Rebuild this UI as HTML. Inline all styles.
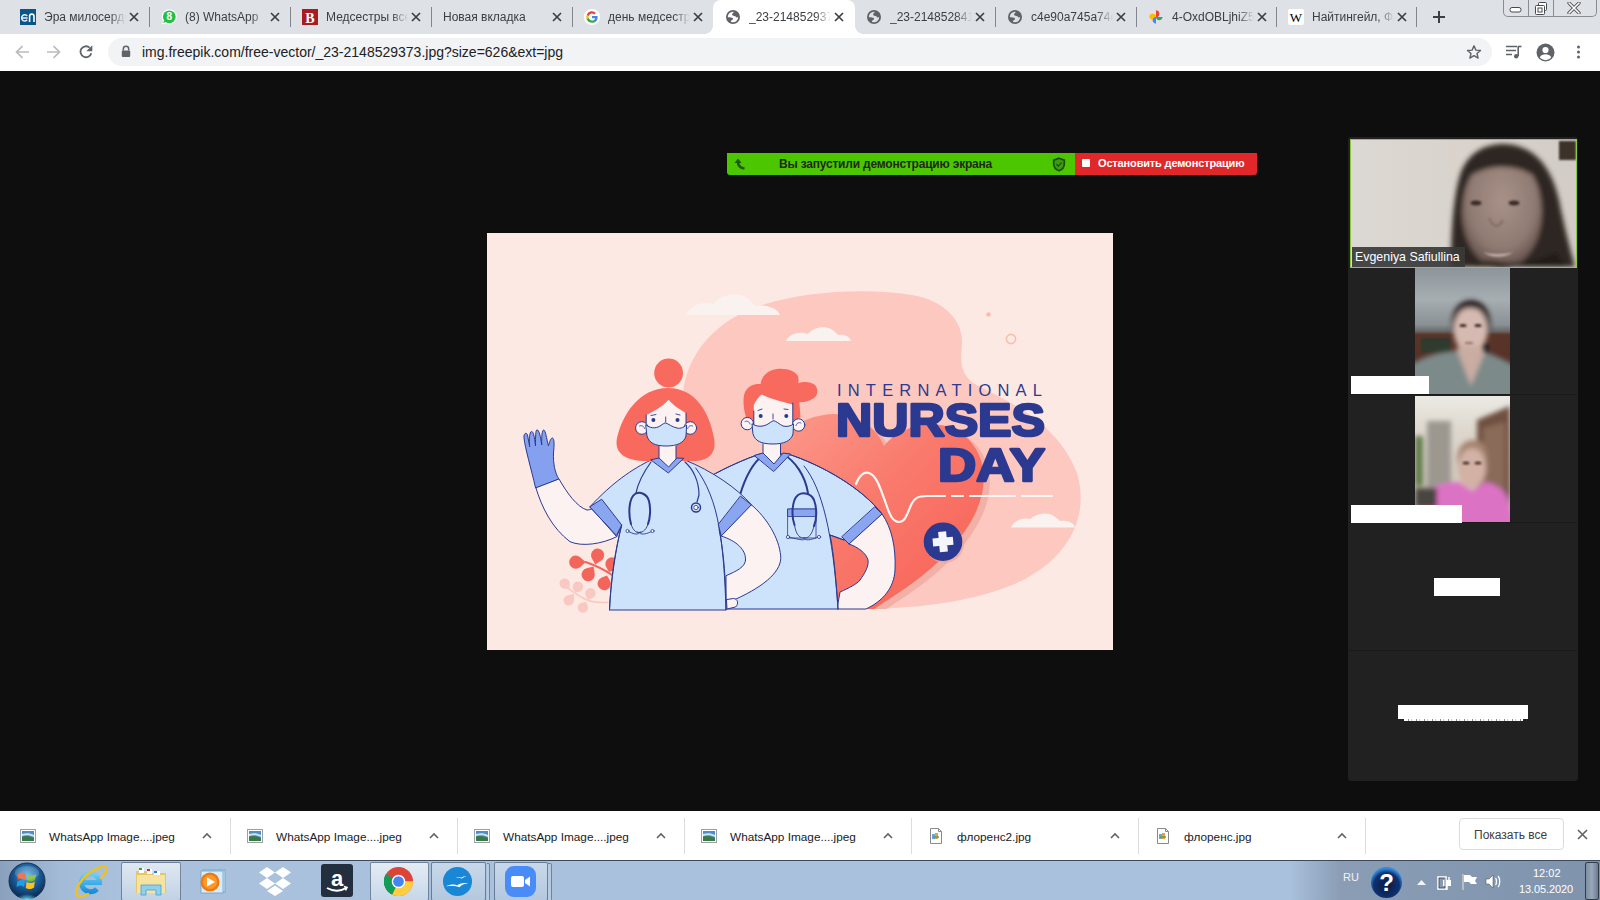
<!DOCTYPE html>
<html><head><meta charset="utf-8">
<style>
*{box-sizing:border-box;margin:0;padding:0}
html,body{width:1600px;height:900px;overflow:hidden;background:#0e0e0e;font-family:"Liberation Sans",sans-serif}
.a{position:absolute}
#tabs{left:0;top:0;width:1600px;height:34px;background:#dee1e6}
.tab{position:absolute;top:0;height:34px;width:141px}
.tab .fav{position:absolute;left:12px;top:9px;width:16px;height:16px}
.tab .t{position:absolute;left:36px;top:10px;width:76px;height:16px;font-size:12px;line-height:14px;color:#3c4043;white-space:nowrap;overflow:hidden;
 -webkit-mask-image:linear-gradient(90deg,#000 80%,transparent 100%)}
.tab .x{position:absolute;left:121px;top:12px;width:10px;height:10px}
.sep{position:absolute;top:7px;width:1px;height:20px;background:#80868b}
#toolbar{left:0;top:34px;width:1600px;height:37px;background:#fff}
#omni{left:108px;top:38px;width:1384px;height:28px;border-radius:14px;background:#f1f3f4}
#url{left:142px;top:44px;font-size:14px;line-height:16px;color:#202124;white-space:nowrap}
#shelf{left:0;top:811px;width:1600px;height:49px;background:#fff}
.dl{position:absolute;top:0;height:49px;width:227px}
.dl .ic{position:absolute;left:20px;top:18px;width:16px;height:14px}
.dl .t{position:absolute;left:49px;top:19px;font-size:11.8px;line-height:14px;color:#202124;white-space:nowrap}
.dl .ch{position:absolute;left:202px;top:21px;width:10px;height:7px}
.dsep{position:absolute;top:7px;width:1px;height:36px;background:#dadce0}
#taskbar{left:0;top:860px;width:1600px;height:40px;background:linear-gradient(90deg,#8aa0bc 0px,#a3bbd7 60px,#a9c1dc 120px,#a9c1dc 1290px,#8a9db5 1340px,#7f93ad 1600px);border-top:1px solid #3b4a5c}
.tb{position:absolute;top:1px;height:39px;border:1px solid rgba(40,60,90,.55);border-radius:2px;background:linear-gradient(#d8e3ef,#b5c8dd)}
#panel{left:1348px;top:137px;width:230px;height:644px;background:#212121;border-radius:3px}
</style></head><body>

<!-- TAB STRIP -->
<div id="tabs" class="a">
<div class="a" style="left:713px;top:0;width:142px;height:34px;background:#fff;border-radius:8px 8px 0 0"></div>
<div class="a" style="left:705px;top:26px;width:8px;height:8px;background:radial-gradient(circle at 0 0,transparent 7.5px,#fff 8px)"></div>
<div class="a" style="left:855px;top:26px;width:8px;height:8px;background:radial-gradient(circle at 100% 0,transparent 7.5px,#fff 8px)"></div>
<div class="tab" style="left:8px"><svg class="fav" viewBox="0 0 16 16"><rect width="16" height="16" fill="#0b5689"/><path d="M7.2 10.8 A3.1 3.1 0 1 1 7.2 7 M2 8.9 H7.6" stroke="#e8f0f6" stroke-width="1.5" fill="none"/><path d="M9.6 15 V9.2 A2.2 2.2 0 0 1 14 9.2 V15" stroke="#fff" stroke-width="1.6" fill="none" transform="translate(0,-1.9)"/></svg><div class="t" style="left:36px;width:82px">Эра милосердия — православная газета</div><svg class="x" viewBox="0 0 10 10"><path d="M1 1 9 9M9 1 1 9" stroke="#3c4043" stroke-width="1.7"/></svg></div>
<div class="tab" style="left:149px"><svg class="fav" viewBox="0 0 16 16"><circle cx="8.3" cy="7.8" r="7.6" fill="#fff"/><path d="M3 11 L0.8 15.6 L5.8 13.8Z" fill="#fff"/><circle cx="8.3" cy="7.8" r="6.4" fill="#25c043"/><path d="M3.3 11 L2.2 14 L5.3 12.8Z" fill="#25c043"/><text x="8.4" y="11.4" font-size="10" font-weight="700" font-family="Liberation Sans" fill="#fff" text-anchor="middle">8</text></svg><div class="t" style="left:36px;width:82px">(8) WhatsApp</div><svg class="x" viewBox="0 0 10 10"><path d="M1 1 9 9M9 1 1 9" stroke="#3c4043" stroke-width="1.7"/></svg></div>
<div class="tab" style="left:290px"><svg class="fav" viewBox="0 0 16 16"><rect width="16" height="16" fill="#a81c1f"/><text x="8" y="13.5" font-size="14" font-weight="700" font-family="Liberation Serif" fill="#fff" text-anchor="middle">B</text></svg><div class="t" style="left:36px;width:82px">Медсестры всего мира</div><svg class="x" viewBox="0 0 10 10"><path d="M1 1 9 9M9 1 1 9" stroke="#3c4043" stroke-width="1.7"/></svg></div>
<div class="tab" style="left:431px"><div class="t" style="left:12px;width:106px">Новая вкладка</div><svg class="x" viewBox="0 0 10 10"><path d="M1 1 9 9M9 1 1 9" stroke="#3c4043" stroke-width="1.7"/></svg></div>
<div class="tab" style="left:572px"><svg class="fav" viewBox="0 0 16 16"><circle cx="8" cy="8" r="8" fill="#fff"/><path d="M13.6 8.2c0-.4 0-.8-.1-1.2H8v2.2h3.2a2.8 2.8 0 0 1-1.2 1.8v1.5h1.9c1.1-1 1.7-2.5 1.7-4.3z" fill="#4285f4"/><path d="M8 13.8c1.6 0 2.9-.5 3.9-1.4L10 10.9c-.5.4-1.2.6-2 .6-1.5 0-2.8-1-3.3-2.4H2.8v1.5A5.8 5.8 0 0 0 8 13.8z" fill="#34a853"/><path d="M4.7 9.1a3.5 3.5 0 0 1 0-2.2V5.4H2.8a5.8 5.8 0 0 0 0 5.2z" fill="#fbbc05"/><path d="M8 4.5c.9 0 1.6.3 2.2.9l1.7-1.7A5.8 5.8 0 0 0 2.8 5.4l1.9 1.5C5.2 5.5 6.5 4.5 8 4.5z" fill="#ea4335"/></svg><div class="t" style="left:36px;width:82px">день медсестры картинки</div><svg class="x" viewBox="0 0 10 10"><path d="M1 1 9 9M9 1 1 9" stroke="#3c4043" stroke-width="1.7"/></svg></div>
<div class="tab" style="left:713px"><svg class="fav" style="left:13px;top:10px;width:14px;height:14px" viewBox="0 0 14 14"><circle cx="7" cy="7" r="6.1" fill="none" stroke="#5f6368" stroke-width="1.8"/><path fill="#5f6368" d="M8.3 1 C8 2.5 6.3 3 6.1 4.2 C6 5 6.5 5.5 7.5 5.7 C9 6 9.8 6.3 10.3 7.6 L13 7 L12 2.5 Z M1 7.2 C3 7 5.5 7.2 6.3 7.8 C7.3 8.5 7.5 9.3 6 10 C5 10.5 4.9 11.5 4.5 13 L1.5 10.5 Z"/></svg><div class="t" style="left:36px;width:82px">_23-2148529373.jpg</div><svg class="x" viewBox="0 0 10 10"><path d="M1 1 9 9M9 1 1 9" stroke="#3c4043" stroke-width="1.7"/></svg></div>
<div class="tab" style="left:854px"><svg class="fav" style="left:13px;top:10px;width:14px;height:14px" viewBox="0 0 14 14"><circle cx="7" cy="7" r="6.1" fill="none" stroke="#5f6368" stroke-width="1.8"/><path fill="#5f6368" d="M8.3 1 C8 2.5 6.3 3 6.1 4.2 C6 5 6.5 5.5 7.5 5.7 C9 6 9.8 6.3 10.3 7.6 L13 7 L12 2.5 Z M1 7.2 C3 7 5.5 7.2 6.3 7.8 C7.3 8.5 7.5 9.3 6 10 C5 10.5 4.9 11.5 4.5 13 L1.5 10.5 Z"/></svg><div class="t" style="left:36px;width:82px">_23-2148528412.jpg</div><svg class="x" viewBox="0 0 10 10"><path d="M1 1 9 9M9 1 1 9" stroke="#3c4043" stroke-width="1.7"/></svg></div>
<div class="tab" style="left:995px"><svg class="fav" style="left:13px;top:10px;width:14px;height:14px" viewBox="0 0 14 14"><circle cx="7" cy="7" r="6.1" fill="none" stroke="#5f6368" stroke-width="1.8"/><path fill="#5f6368" d="M8.3 1 C8 2.5 6.3 3 6.1 4.2 C6 5 6.5 5.5 7.5 5.7 C9 6 9.8 6.3 10.3 7.6 L13 7 L12 2.5 Z M1 7.2 C3 7 5.5 7.2 6.3 7.8 C7.3 8.5 7.5 9.3 6 10 C5 10.5 4.9 11.5 4.5 13 L1.5 10.5 Z"/></svg><div class="t" style="left:36px;width:82px">c4e90a745a74e2.jpg</div><svg class="x" viewBox="0 0 10 10"><path d="M1 1 9 9M9 1 1 9" stroke="#3c4043" stroke-width="1.7"/></svg></div>
<div class="tab" style="left:1136px"><svg class="fav" viewBox="0 0 16 16"><path d="M8 8V1.5A3.2 3.2 0 0 1 8 8z" fill="#ea4335"/><path d="M8 1.5 4.8 4.8 8 8z" fill="#ea4335" opacity=".0"/><path d="M8 8H1.5A3.2 3.2 0 0 1 8 8z" fill="#fbbc05"/><path d="M8 8h-6.5a3.3 3.3 0 0 0 6.5 0z" fill="#fbbc05"/><path d="M8 8v6.5A3.3 3.3 0 0 1 8 8z" fill="#4285f4"/><path d="M8 8v6.5a3.3 3.3 0 0 0 0-6.5z" fill="#4285f4" opacity="0"/><path d="M8 8h6.5A3.3 3.3 0 0 0 8 8z" fill="#34a853" opacity="0"/><path d="M8 8V1.5a3.3 3.3 0 0 0 0 6.5z" fill="#ea4335" opacity="0"/><path d="M8 1.5V8L4.7 4.7A3.3 3.3 0 0 1 8 1.5z" fill="#ea4335" opacity="0"/><g><path d="M8 8 4.6 4.6A3.3 3.3 0 0 1 8 1.4z" fill="#ea4335" opacity="0"/></g><path d="M8 8V1.5c1.8 0 3.3 1.5 3.3 3.3S9.8 8 8 8z" fill="#ea4335"/><path d="M8 8H1.5c0-1.8 1.5-3.3 3.3-3.3S8 6.2 8 8z" fill="#fbbc05"/><path d="M8 8v6.5c-1.8 0-3.3-1.5-3.3-3.3S6.2 8 8 8z" fill="#4285f4"/><path d="M8 8h6.5c0 1.8-1.5 3.3-3.3 3.3S8 9.8 8 8z" fill="#34a853"/></svg><div class="t" style="left:36px;width:82px">4-OxdOBLjhiZ5o.jpg</div><svg class="x" viewBox="0 0 10 10"><path d="M1 1 9 9M9 1 1 9" stroke="#3c4043" stroke-width="1.7"/></svg></div>
<div class="tab" style="left:1276px"><svg class="fav" viewBox="0 0 16 16"><rect width="16" height="16" rx="2" fill="#fff"/><text x="8" y="12.5" font-size="13" font-family="Liberation Serif" fill="#000" text-anchor="middle">W</text></svg><div class="t" style="left:36px;width:82px">Найтингейл, Флоренс</div><svg class="x" viewBox="0 0 10 10"><path d="M1 1 9 9M9 1 1 9" stroke="#3c4043" stroke-width="1.7"/></svg></div>
<div class="sep" style="left:149px"></div>
<div class="sep" style="left:290px"></div>
<div class="sep" style="left:431px"></div>
<div class="sep" style="left:572px"></div>
<div class="sep" style="left:995px"></div>
<div class="sep" style="left:1136px"></div>
<div class="sep" style="left:1276px"></div>
<div class="sep" style="left:1416px"></div>
<svg class="a" style="left:1433px;top:11px" width="12" height="12" viewBox="0 0 12 12"><path d="M6 0v12M0 6h12" stroke="#3c4043" stroke-width="2"/></svg>
<div class="a" style="left:1503px;top:-1px;width:94px;height:18px;border:1px solid #8a8d92;border-top:none;border-radius:0 0 5px 5px;background:#dee1e6"></div>
<div class="a" style="left:1528px;top:0;width:1px;height:17px;background:#8a8d92"></div>
<div class="a" style="left:1553px;top:0;width:1px;height:17px;background:#8a8d92"></div>
<svg class="a" style="left:1509px;top:6px" width="14" height="8" viewBox="0 0 14 8"><rect x="1" y="1.5" width="11" height="4.5" rx="2" fill="#fff" stroke="#45484d" stroke-width="1"/></svg>
<svg class="a" style="left:1533px;top:1px" width="16" height="15" viewBox="0 0 16 15"><rect x="5.5" y="1.5" width="8" height="8" rx="1" fill="#fff" stroke="#45484d"/><rect x="2.5" y="4.5" width="9" height="9" rx="1" fill="#fff" stroke="#45484d"/><rect x="5" y="7" width="4" height="4" fill="none" stroke="#45484d"/></svg>
<svg class="a" style="left:1567px;top:2px" width="14" height="12" viewBox="0 0 14 12"><path d="M2 1 12 11M12 1 2 11" stroke="#45484d" stroke-width="3.2" stroke-linecap="round"/><path d="M2 1 12 11M12 1 2 11" stroke="#fff" stroke-width="1.6" stroke-linecap="round"/></svg>
</div>
<div id="toolbar" class="a"></div>
<div id="omni" class="a"></div>
<svg class="a" style="left:14px;top:44px" width="16" height="16" viewBox="0 0 16 16"><path d="M15 8H3M8.5 2.2 2.5 8l6 5.8" stroke="#b9bcbf" stroke-width="1.7" fill="none"/></svg>
<svg class="a" style="left:46px;top:44px" width="16" height="16" viewBox="0 0 16 16"><path d="M1 8h12M7.5 2.2l6 5.8-6 5.8" stroke="#b9bcbf" stroke-width="1.7" fill="none"/></svg>
<svg class="a" style="left:78px;top:44px" width="16" height="16" viewBox="0 0 16 16"><path d="M13.3 9.2A5.5 5.5 0 1 1 11.6 3.6" stroke="#5f6368" stroke-width="1.8" fill="none"/><path d="M14.3 1.2v6h-6z" fill="#5f6368"/></svg>
<svg class="a" style="left:121px;top:45px" width="10" height="13" viewBox="0 0 10 13"><path d="M2.3 5.5V4a2.7 2.7 0 0 1 5.4 0v1.5" stroke="#5f6368" stroke-width="1.5" fill="none"/><rect x="0.8" y="5.5" width="8.4" height="6.5" rx="1" fill="#5f6368"/></svg>
<svg class="a" style="left:1466px;top:44px" width="16" height="16" viewBox="0 0 16 16"><path d="M8 1.8l1.9 4.3 4.6.4-3.5 3 1.1 4.6L8 11.6l-4.1 2.5L5 9.5l-3.5-3 4.6-.4z" stroke="#5f6368" stroke-width="1.4" fill="none" stroke-linejoin="round"/></svg>
<svg class="a" style="left:1505px;top:44px" width="18" height="16" viewBox="0 0 18 16"><path d="M1 2.5h11M1 6.5h10M1 10.5h6" stroke="#5f6368" stroke-width="1.6"/><path d="M13.2 2.2V12" stroke="#5f6368" stroke-width="1.6"/><path d="M13 2.5h3.5" stroke="#5f6368" stroke-width="1.6"/><circle cx="11.2" cy="12.2" r="2.2" fill="#5f6368"/></svg>
<svg class="a" style="left:1536px;top:43px" width="19" height="19" viewBox="0 0 19 19"><circle cx="9.5" cy="9.5" r="9" fill="#5f6368"/><circle cx="9.5" cy="7" r="3.1" fill="#fff"/><path d="M3.8 14.2c1.2-2 3.4-2.9 5.7-2.9s4.5.9 5.7 2.9a7 7 0 0 1-11.4 0z" fill="#fff"/></svg>
<svg class="a" style="left:1576px;top:45px" width="5" height="14" viewBox="0 0 5 14"><circle cx="2.5" cy="2" r="1.5" fill="#5f6368"/><circle cx="2.5" cy="7" r="1.5" fill="#5f6368"/><circle cx="2.5" cy="12" r="1.5" fill="#5f6368"/></svg>
<div id="url" class="a">img.freepik.com/free-vector/_23-2148529373.jpg?size=626&amp;ext=jpg</div>

<!-- IMAGE -->
<svg class="a" style="left:487px;top:233px" width="626" height="417" viewBox="0 0 626 417">
<defs>
<linearGradient id="hg" x1="0" y1="0" x2="1" y2="1"><stop offset="0" stop-color="#fb9a8c"/><stop offset=".45" stop-color="#f97a6c"/><stop offset="1" stop-color="#f85f55"/></linearGradient>
</defs>
<rect width="626" height="417" fill="#fde9e4"/>
<!-- blob -->
<path d="M196 160 C200 120 230 86 275 72 C320 58 380 55 425 62 C460 68 476 90 475 110 C474 128 472 138 486 150 C520 168 570 188 590 240 C602 280 585 320 540 345 C500 366 440 375 380 376 L200 376 Z" fill="#fcc8c0"/>
<!-- clouds -->
<path d="M199 82 C204 72 215 68 226 71 C233 63 245 59 256 63 C262 66 266 70 268 73 C280 71 291 76 293 82 Z" fill="#faf2ef"/>
<path d="M299 108 C302 101 312 98 321 101 C326 95 336 92 344 96 C348 98 350 101 351 102 C358 101 363 104 364 108 Z" fill="#faf2ef"/>
<path d="M524 294.5 C527 287 536 284 543 286 C549 281 560 278 567 283 C570 285 572 287 573 288 C581 287 587 290 588 294.5 Z" fill="#faf2ef"/>
<!-- dots -->
<circle cx="501.5" cy="81.5" r="2.3" fill="#f6bdb3"/>
<circle cx="524" cy="106" r="4.6" fill="none" stroke="#f6bdb3" stroke-width="1.6"/>
<clipPath id="blobclip"><rect x="0" y="0" width="626" height="376"/></clipPath>
<g clip-path="url(#blobclip)">
<path d="M397 213 C415 190 455 183 478 203 C503 225 503 262 478 298 C455 332 420 355 384 378 L290 378 L285 230 C285 205 310 183 346 181 C370 181 390 195 397 213 Z" fill="#f2b0a6" transform="translate(6,4)"/>
<path d="M397 213 C415 190 455 183 478 203 C503 225 503 262 478 298 C455 332 420 355 384 378 L290 378 L285 230 C285 205 310 183 346 181 C370 181 390 195 397 213 Z" fill="url(#hg)"/>
</g>
<g stroke="#2a3a8f" stroke-width="1" stroke-linejoin="round" stroke-linecap="round">
<!-- flowers -->
<g stroke="none">
<path d="M120.8 369.2 C112 370 103 369 96 365 C90 362 85 358 80.8 355" stroke="#f9c9c1" stroke-width="1.6" fill="none"/>
<path d="M82.0 356.0 L77.5 355.8 A5.2 5.2 0 1 1 82.8 351.5 Z" fill="#f9c9c1"/>
<path d="M88.0 359.5 L86.3 355.9 A5.2 5.2 0 1 1 91.9 358.8 Z" fill="#f9c9c1"/>
<path d="M87.0 361.0 L86.9 367.5 A5.2 5.2 0 1 1 80.7 362.3 Z" fill="#f9c9c1"/>
<path d="M99.0 369.0 L100.6 372.4 A5.2 5.2 0 1 1 95.3 369.4 Z" fill="#f9c9c1"/>
<path d="M101.0 367.0 L98.8 362.7 A5.2 5.2 0 1 1 105.5 365.1 Z" fill="#f9c9c1"/>
<path d="M125 342 C118 337 110 333 98.6 329" stroke="#f3655a" stroke-width="2" fill="none"/>
<path d="M98.6 329.0 L93.3 334.0 A6.6 6.6 0 1 1 93.1 324.2 Z" fill="#f3655a"/>
<path d="M108.3 331.6 L104.8 325.3 A6.6 6.6 0 1 1 114.3 327.6 Z" fill="#f3655a"/>
<path d="M106.6 333.6 L107.7 340.7 A6.6 6.6 0 1 1 99.6 335.3 Z" fill="#f3655a"/>
<path d="M119.9 342.6 L122.7 347.0 A6.6 6.6 0 1 1 114.9 344.4 Z" fill="#f3655a"/>
<path d="M122.0 339.0 L119.3 334.3 A6.6 6.6 0 1 1 127.1 337.2 Z" fill="#f3655a"/>
</g>

<!-- ===== MALE (behind) ===== -->
<!-- male right arm -->
<path d="M395 281 C405 295 409 315 408 337 C407 355 396 368 379 376 L350 376 L353 359 C362 355 370 351 373 347 C378 340 382 333 381 327 C379 320 371 314 362 311 Z" fill="#fdf2f2"/>
<!-- male body -->
<path d="M273 221 C258 226 240 234 222 244 L214 376 L351 376 C349 345 346 315 343 302 L357 307 L395 281 C375 255 335 232 301 221 Z" fill="#cde2fb"/>
<path d="M301 221 C335 232 375 255 395 281 M357 307 L343 302 M317 233 C335 255 346 300 351 376 M273 221 C258 226 240 234 222 244" fill="none"/>
<!-- male cuff -->
<path d="M388 274 L395 281 L362 311 L355 304 Z" fill="#8ba6f0"/>
<!-- pocket -->
<rect x="301" y="276" width="28" height="29" fill="none" stroke-width=".8"/>
<rect x="301" y="276" width="28" height="7.5" fill="#8ba6f0" stroke-width=".8"/>
<!-- male stethoscope -->
<path d="M276 222 C266 230 258 245 253 262" fill="none" stroke-width="2"/>
<path d="M296 221 C308 228 318 242 321 260" fill="none" stroke-width="2"/>
<path d="M307.5 292 C304 282 305 267 311 262 C316 259 324 260 327 267 C330 275 330 286 327 293" fill="none" stroke-width="2"/><path d="M307.5 292 C309 302 313 306 318 305 M327 293 C325 302 321 306 317 305" fill="none" stroke-width=".9"/>
<path d="M301 304 C310 306 318 308 317.5 306 C320 308 326 306 332 304" fill="none" stroke-width=".9"/>
<circle cx="301" cy="304" r="1.6" fill="#fdf2f2" stroke-width=".8"/><circle cx="332" cy="304" r="1.6" fill="#fdf2f2" stroke-width=".8"/>
<!-- male neck & collar -->
<path d="M276 208 L276 222 L287 233 L293.5 222 L293.5 208 Z" fill="#fdf2f2" stroke="none"/>
<path d="M276 211 L276 222 M293.5 211 L293.5 222" fill="none"/>
<path d="M267.5 222.4 L276 220 L287 231 L296 220 L303.6 221 L287 238.3 Z" fill="#8ba6f0"/>
<!-- male hair -->
<path d="M259 184 C256 175 255.5 163 258.6 158 C261.5 153 267 150.5 273.6 151 C274.5 144 280 137 290 136 C300 135 309 138 311.3 144 C311.6 146.5 311.6 148.5 311.3 150.3 C316 148 324 148.5 328 152 C331.5 156 331 162 327 165 C323 168 317 169.5 312.4 169.2 L313.5 184 L306 190 L262 190 Z" fill="#f86a5e" stroke="none"/>
<!-- male face -->
<path d="M266.8 199 L266.8 172 C269 167 272 163.5 274.7 161.4 C282 165.5 295 169 305.8 171.4 L305.8 199 Z" fill="#fdf2f2" stroke="none"/>
<path d="M266.8 178 L266.8 192 M305.8 170 L305.8 192" fill="none"/>
<circle cx="260.3" cy="190.6" r="6.2" fill="#fdf2f2"/><path d="M258 188.5 C260 187.5 262.5 188.5 263 191" fill="none" stroke-width=".8"/>
<circle cx="311.6" cy="192" r="6.2" fill="#fdf2f2"/><path d="M314 190 C312 189 309.5 190 309 192.5" fill="none" stroke-width=".8"/>
<circle cx="273.7" cy="183.1" r="2" fill="#2a3a8f" stroke="none"/><circle cx="299.3" cy="183.1" r="2" fill="#2a3a8f" stroke="none"/>
<path d="M271 177.5 L275 176 M297 176 L301 176.5 M286 181 L286 186" fill="none" stroke-width=".9"/>
<path d="M265.3 191 C270 194 276 194 281 191 C284 189 286 187.5 287 187.8 C289 188 292 191 296 193 C300 194 304 193 306.5 191 L306 201 C304 208 297 211 286 211 C274 211 268 208 266 201 Z" fill="#cde2fb"/>

<!-- ===== FEMALE ===== -->
<!-- female right arm on hip -->
<path d="M264.4 271.8 C280 285 292 305 293.7 322.9 C295 337 280 352 248 366.5 L239 368 L239 342.7 C250 338 258 334 258.5 327 C259 317 250 308 234.2 303 Z" fill="#fdf2f2"/>
<path d="M247 365.5 C251 366 252 371 248.5 374 L240 376 L239.5 367 Z" fill="#fdf2f2"/>
<!-- waving arm -->
<path d="M48.8 254.5 C55 275 65 295 83 308.7 C95 314 115 311 129.7 303.7 L114.7 266.2 C110 272 106 277 100 277 C90 274 80 260 72 246 Z" fill="#fdf2f2"/>
<!-- glove -->
<path d="M48.5 254.6 C44 235 38 215 37 205 C36.5 200 39.5 199 40.5 202 L42.7 213.7 C42 206 42.5 199 44.5 198.5 C46.5 198.5 47.5 204 48.5 212.8 C48.5 204 48.5 197 50 196.8 C52 197 53.5 203 54.7 212 C54.5 203 55 197 56.8 197 C58.5 197.5 59.5 205 61.4 212.8 C62.5 209 63.8 205 65.4 205 C67.5 205.5 67.3 212 66.5 220 C66 230 68 240 71.6 245.7 Z" fill="#84a0ef"/>
<!-- female body -->
<path d="M164 227 C145 236 125 250 103 273.7 L129.7 303.7 L134.7 292 C130 310 124 340 122.5 377 L239 377 C239 350 237 320 232 296 L264.4 271.8 C250 255 225 238 198 227 Z" fill="#cde2fb"/>
<path d="M134.7 292 C129 315 124 345 122.5 377 M208.7 235 C220 250 228 270 232 294 C236 315 238 345 239 377" fill="none"/>
<!-- cuffs -->
<path d="M103 273.7 L114.7 266.2 L134.7 292 L129.7 302 Z" fill="#8ba6f0"/>
<path d="M253.7 263.3 L264.4 271.8 L234.2 303 L231.4 291.7 Z" fill="#8ba6f0"/>
<!-- female stethoscope -->
<path d="M164 229 C156 240 151 250 149 260" fill="none" stroke-width="1.2"/>
<path d="M198 229 C206 236 212 248 212 262 L210 269" fill="none" stroke-width="1.2"/>
<path d="M144 291 C141 280 142 265 148 261 C153 258 160 261 162 268 C164 276 163 286 161 291" fill="none" stroke-width="2"/><path d="M144 291 C146 298 150 301 154 299 M161 291 C159 298 154 301 150 299" fill="none" stroke-width=".9"/>
<path d="M140.5 298 C146 301 150 302 152.5 300 C155 302 160 301 165.5 298" fill="none" stroke-width=".9"/>
<circle cx="140.5" cy="298" r="1.6" fill="#fdf2f2" stroke-width=".8"/><circle cx="165.5" cy="298" r="1.6" fill="#fdf2f2" stroke-width=".8"/>
<circle cx="209" cy="274.5" r="4.5" fill="#cde2fb" stroke-width="1.5"/>
<circle cx="209" cy="274.5" r="2.2" fill="#fdf2f2" stroke-width=".8"/>
<!-- female hair -->
<circle cx="181.6" cy="140" r="14.4" fill="#f86a5e" stroke="none"/>
<path d="M181 155 C152 155 135 182 130 205 C127 220 138 228 160 228 L206 228 C222 228 230 220 227 205 C223 182 210 155 181 155 Z" fill="#f86a5e" stroke="none"/>
<!-- neck & collar -->
<path d="M172 210 L172 226 L181.6 236 L189 226 L189 210 Z" fill="#fdf2f2" stroke="none"/>
<path d="M172 213 L172 227 M189 213 L189 227" fill="none"/>
<path d="M164 226.7 L172 225 L181.6 234 L190 225 L196.8 225.3 L181.6 239.7 Z" fill="#8ba6f0"/>
<!-- face -->
<path d="M159.2 200 L159.2 182 C168 178 176 173 181.6 166.8 C186 172 193 177 199 180 L199 200 Z" fill="#fdf2f2" stroke="none"/>
<path d="M159.2 182 L159.2 195 M199 180 L199 195" fill="none"/>
<circle cx="154.9" cy="195" r="6.3" fill="#fdf2f2"/><path d="M152.5 193 C154.5 192 157 193 157.5 195.5" fill="none" stroke-width=".8"/>
<circle cx="203.3" cy="195" r="6.3" fill="#fdf2f2"/><path d="M205.7 193 C203.7 192 201.2 193 200.7 195.5" fill="none" stroke-width=".8"/>
<circle cx="166.4" cy="187" r="2" fill="#2a3a8f" stroke="none"/><circle cx="190.5" cy="187" r="2" fill="#2a3a8f" stroke="none"/>
<path d="M164 182.5 L169 181.5 M189 181 L193 182 M178.7 184 L178.7 189" fill="none" stroke-width=".9"/>
<path d="M159 192 C163 195 168 196 173 193 C176 191 178 189.5 178.7 190 C181 190.5 185 194 190 195 C194 196 197 194 199.6 192 L199 203 C197 210 190 213 179 213 C168 213 162 210 160 203 Z" fill="#cde2fb"/>
</g>
<!-- heartbeat line -->
<path d="M369 251 C372 243 377 238 382 240 C390 243 393 255 398 268 C402 280 405 289 412 289 C419 289 421 278 425 270 C428 265 431 263 440 263 L458 263 M465 263 L476 263 M483 263 L528 263 M535 263 L565 263" stroke="#fdf6f4" stroke-width="2.2" fill="none" stroke-linecap="round"/>
<!-- plus -->
<circle cx="457.5" cy="310.5" r="19.5" fill="#e9a79c" opacity=".7"/>
<circle cx="456" cy="308.7" r="19.3" fill="#2b3990"/>
<path d="M456 298.5 L456 318.9 M445.8 308.7 L466.2 308.7" stroke="#f4f6fb" stroke-width="8" transform="rotate(-5 456 308.7)"/>
<!-- text -->
<text x="350" y="163" font-family="Liberation Sans" font-size="16.5" fill="#2d3a8f" textLength="205">INTERNATIONAL</text>
<text x="349" y="203" font-family="Liberation Sans" font-weight="700" font-size="46" fill="#2b3990" stroke="#2b3990" stroke-width="2.6" stroke-linejoin="round" textLength="209" lengthAdjust="spacingAndGlyphs">NURSES</text>
<text x="451" y="248" font-family="Liberation Sans" font-weight="700" font-size="46" fill="#2b3990" stroke="#2b3990" stroke-width="2.6" stroke-linejoin="round" textLength="107" lengthAdjust="spacingAndGlyphs">DAY</text>

</svg>

<!-- ZOOM BANNER -->
<div class="a" style="left:727px;top:153px;width:348px;height:22px;background:#4cc600;border-radius:0 0 0 3px"></div>
<div class="a" style="left:1075px;top:153px;width:182px;height:22px;background:#e0272a;border-radius:0 0 3px 0"></div>
<svg class="a" style="left:734px;top:158px" width="12" height="12" viewBox="0 0 12 12"><path d="M0.5 5 L4 0.5 L7.5 5 Z" fill="#1d5a12"/><path d="M4 4 C4 8 6 10 10.5 10.5" stroke="#1d5a12" stroke-width="2.6" fill="none"/></svg>
<div class="a" style="left:779px;top:157px;font-size:12px;font-weight:700;line-height:14px;color:#1e2a1c;white-space:nowrap;letter-spacing:-0.2px">Вы запустили демонстрацию экрана</div>
<svg class="a" style="left:1052px;top:157px" width="14" height="15" viewBox="0 0 14 15"><path d="M7 1.2 12.3 3.2V7c0 3.3-2.2 5.6-5.3 6.8C3.9 12.6 1.7 10.3 1.7 7V3.2Z" fill="#3a9e0c" stroke="#1f4a16" stroke-width="1.7"/><path d="M4.5 7.3 6.3 9.1 9.6 5.6" fill="none" stroke="#1f4a16" stroke-width="1.3"/></svg>
<div class="a" style="left:1082px;top:159px;width:8px;height:8px;background:#fff;border-radius:1px"></div>
<div class="a" style="left:1098px;top:156px;font-size:11px;font-weight:700;line-height:14px;color:#fff;white-space:nowrap;letter-spacing:-0.15px">Остановить демонстрацию</div>

<!-- PANEL -->
<div id="panel" class="a"></div>
<div class="a" style="left:1349px;top:394px;width:228px;height:1px;background:#1a1a1a"></div>
<div class="a" style="left:1349px;top:522px;width:228px;height:1px;background:#1a1a1a"></div>
<div class="a" style="left:1349px;top:650px;width:228px;height:1px;background:#1a1a1a"></div>
<!-- tile 1 -->
<div class="a" style="left:1350px;top:139px;width:227px;height:129px;background:#8dc63f"></div>
<svg class="a" style="left:1351px;top:140px" width="225" height="127" viewBox="0 0 225 127">
<defs>
<filter id="bl1" x="-20%" y="-20%" width="140%" height="140%"><feGaussianBlur stdDeviation="2.5"/></filter>
<filter id="bl2" x="-20%" y="-20%" width="140%" height="140%"><feGaussianBlur stdDeviation="1.2"/></filter>
<linearGradient id="wall1" x1="0" y1="0" x2="1" y2="0"><stop offset="0" stop-color="#dcd8d3"/><stop offset=".5" stop-color="#d9d3cc"/><stop offset="1" stop-color="#d2ccc6"/></linearGradient>
<radialGradient id="skin1" cx=".5" cy=".4" r=".6"><stop offset="0" stop-color="#a89288"/><stop offset=".7" stop-color="#8f7a72"/><stop offset="1" stop-color="#62504a"/></radialGradient>
</defs>
<rect width="225" height="127" fill="url(#wall1)"/>
<g filter="url(#bl1)">
<path d="M100 127 C100 95 102 55 110 32 C118 12 135 3 155 4 C182 6 200 25 208 60 C214 90 220 112 224 127 Z" fill="#2e2624"/>
<ellipse cx="151" cy="72" rx="40" ry="57" fill="url(#skin1)"/>
<path d="M110 45 C118 20 140 12 160 16 C182 20 196 36 200 52 C190 34 164 24 140 28 C125 31 114 38 110 45Z" fill="#2e2624"/>
<path d="M118 127 C128 120 140 120 150 122 C165 124 185 122 205 112 L215 127Z" fill="#221a19"/>
</g>
<g filter="url(#bl2)">
<ellipse cx="125" cy="63" rx="5.5" ry="2.6" fill="#3a2c28"/>
<ellipse cx="163" cy="63" rx="5.5" ry="2.6" fill="#3a2c28"/>
<path d="M132 112 C140 115 154 115 162 112 C154 118 140 118 132 112Z" fill="#cbbab4"/>
<path d="M138 78 C142 88 148 88 152 80" fill="none" stroke="#8a726a" stroke-width="3"/>
</g>
<rect x="208" y="1" width="17" height="19" fill="#3a302c" filter="url(#bl2)"/>
<rect x="1" y="107" width="113" height="20" fill="#3a3a3a" opacity=".92"/>
</svg>
<div class="a" style="left:1355px;top:250px;font-size:12.4px;line-height:14px;color:#fff;white-space:nowrap">Evgeniya Safiullina</div>
<!-- tile 2 -->
<svg class="a" style="left:1415px;top:268px" width="95" height="126" viewBox="0 0 95 126">
<defs>
<linearGradient id="ceil2" x1="0" y1="0" x2="0" y2="1"><stop offset="0" stop-color="#8c959a"/><stop offset=".25" stop-color="#a6aeb2"/><stop offset=".45" stop-color="#8a9094"/><stop offset=".5" stop-color="#6a6a6a"/><stop offset=".53" stop-color="#5a3429"/><stop offset=".8" stop-color="#553026"/></linearGradient>
</defs>
<rect width="95" height="126" fill="url(#ceil2)"/>
<g filter="url(#bl2)">
<rect x="6" y="70" width="29" height="15" fill="#2f3a2e"/>
<rect x="66" y="76" width="8" height="10" fill="#222"/>
</g>
<g filter="url(#bl1)">
<path d="M37 62 C35 42 44 32 56 32 C68 32 77 42 75 62 L72 70 L40 70Z" fill="#2c2220"/>
<ellipse cx="55.5" cy="62" rx="17" ry="23" fill="#d4bab0"/>
<path d="M39 50 C42 38 50 35 57 35 C66 35 72 40 74 50 C68 42 60 40 55 40 C48 40 42 44 39 50Z" fill="#2c2220"/>
<path d="M43 78 L67 78 L72 90 L56 122 L40 90Z" fill="#c9aca2"/>
<path d="M-10 140 L-10 100 C8 88 24 84 42 82.5 L56 118 L70 84 C82 88 95 95 105 100 L105 140Z" fill="#7c8a8a"/>
</g>
<g filter="url(#bl2)">
<ellipse cx="48" cy="57.5" rx="3.5" ry="1.5" fill="#3a2a26"/><ellipse cx="63" cy="57.5" rx="3.5" ry="1.5" fill="#3a2a26"/>
<ellipse cx="54" cy="75" rx="4.5" ry="1.3" fill="#a07870"/>
</g>
</svg>
<div class="a" style="left:1351px;top:376px;width:78px;height:18px;background:#fff"></div>
<!-- tile 3 -->
<svg class="a" style="left:1415px;top:396px" width="95" height="126" viewBox="0 0 95 126">
<defs>
<linearGradient id="wall3" x1="0" y1="0" x2="0" y2="1"><stop offset="0" stop-color="#eceae4"/><stop offset=".3" stop-color="#dcd6cc"/><stop offset="1" stop-color="#c9beb2"/></linearGradient>
</defs>
<rect width="95" height="126" fill="url(#wall3)"/>
<g filter="url(#bl1)">
<rect x="0" y="40" width="8" height="50" fill="#5f7a4a"/>
<rect x="12" y="25" width="24" height="75" fill="#9c9890"/>
<path d="M62 24 L95 10 L95 126 L62 126Z" fill="#6e5040"/>
<path d="M68 32 L90 26 L90 120 L68 120 Z" fill="#8a6a58"/>
<path d="M42 64 C42 50 50 44 58 44 C68 44 72 52 72 62 L70 80 L44 80Z" fill="#a48470"/>
<ellipse cx="57" cy="72" rx="14" ry="20" fill="#d3b1a4"/>
<path d="M5 140 L8 100 C14 90 30 86 44 86 L57 95 L70 86 C82 88 92 96 93 104 L105 140Z" fill="#dc72c4"/>
<rect x="0" y="92" width="22" height="20" fill="#4a4440"/>
</g>
<g filter="url(#bl2)">
<ellipse cx="51" cy="67" rx="3.5" ry="1.6" fill="#4a3630"/><ellipse cx="63" cy="67" rx="3.5" ry="1.6" fill="#4a3630"/>
</g>
</svg>
<div class="a" style="left:1351px;top:505px;width:111px;height:18px;background:#fff"></div>
<!-- tile 4 -->
<div class="a" style="left:1434px;top:578px;width:66px;height:18px;background:#fff"></div>
<!-- tile 5 -->
<div class="a" style="left:1398px;top:705px;width:130px;height:14px;background:#fff"></div>
<div class="a" style="left:1404px;top:719px;width:119px;height:2px;background:repeating-linear-gradient(90deg,#fff 0 4px,#8a8a8a 4px 5px,#fff 5px 7px,#c8c8c8 7px 8px)"></div>

<!-- SHELF -->
<div id="shelf" class="a">
<div class="dl" style="left:0px"><svg class="ic" viewBox="0 0 16 14"><rect x=".5" y=".5" width="15" height="13" fill="#fff" stroke="#9aa0a6"/><rect x="2" y="2" width="12" height="10" fill="#4d8fc9"/><path d="M2 8 C5 6 9 7 14 9 L14 12 L2 12Z" fill="#3b7a45"/><path d="M2 5 C6 4 10 4 14 6 L14 8 C10 6 6 6 2 7Z" fill="#cfe3f3"/></svg><div class="t">WhatsApp Image....jpeg</div><svg class="ch" viewBox="0 0 10 7"><path d="M1 6 5 2 9 6" stroke="#5f6368" stroke-width="1.6" fill="none"/></svg></div>
<div class="dl" style="left:227px"><svg class="ic" viewBox="0 0 16 14"><rect x=".5" y=".5" width="15" height="13" fill="#fff" stroke="#9aa0a6"/><rect x="2" y="2" width="12" height="10" fill="#4d8fc9"/><path d="M2 8 C5 6 9 7 14 9 L14 12 L2 12Z" fill="#3b7a45"/><path d="M2 5 C6 4 10 4 14 6 L14 8 C10 6 6 6 2 7Z" fill="#cfe3f3"/></svg><div class="t">WhatsApp Image....jpeg</div><svg class="ch" viewBox="0 0 10 7"><path d="M1 6 5 2 9 6" stroke="#5f6368" stroke-width="1.6" fill="none"/></svg></div>
<div class="dl" style="left:454px"><svg class="ic" viewBox="0 0 16 14"><rect x=".5" y=".5" width="15" height="13" fill="#fff" stroke="#9aa0a6"/><rect x="2" y="2" width="12" height="10" fill="#4d8fc9"/><path d="M2 8 C5 6 9 7 14 9 L14 12 L2 12Z" fill="#3b7a45"/><path d="M2 5 C6 4 10 4 14 6 L14 8 C10 6 6 6 2 7Z" fill="#cfe3f3"/></svg><div class="t">WhatsApp Image....jpeg</div><svg class="ch" viewBox="0 0 10 7"><path d="M1 6 5 2 9 6" stroke="#5f6368" stroke-width="1.6" fill="none"/></svg></div>
<div class="dl" style="left:681px"><svg class="ic" viewBox="0 0 16 14"><rect x=".5" y=".5" width="15" height="13" fill="#fff" stroke="#9aa0a6"/><rect x="2" y="2" width="12" height="10" fill="#4d8fc9"/><path d="M2 8 C5 6 9 7 14 9 L14 12 L2 12Z" fill="#3b7a45"/><path d="M2 5 C6 4 10 4 14 6 L14 8 C10 6 6 6 2 7Z" fill="#cfe3f3"/></svg><div class="t">WhatsApp Image....jpeg</div><svg class="ch" viewBox="0 0 10 7"><path d="M1 6 5 2 9 6" stroke="#5f6368" stroke-width="1.6" fill="none"/></svg></div>
<div class="dl" style="left:908px"><svg class="ic" viewBox="0 0 16 16" style="height:16px;top:17px"><path d="M2.5 .5h8l3 3v12h-11z" fill="#fff" stroke="#8a8a8a"/><path d="M10.5 .5v3h3" fill="none" stroke="#8a8a8a"/><rect x="4" y="6" width="3" height="5" fill="#6aa8d8"/><rect x="7" y="5" width="3" height="6" fill="#e8a23a"/><path d="M5 9h6" stroke="#5aa05a" stroke-width="1.5"/></svg><div class="t">флоренс2.jpg</div><svg class="ch" viewBox="0 0 10 7"><path d="M1 6 5 2 9 6" stroke="#5f6368" stroke-width="1.6" fill="none"/></svg></div>
<div class="dl" style="left:1135px"><svg class="ic" viewBox="0 0 16 16" style="height:16px;top:17px"><path d="M2.5 .5h8l3 3v12h-11z" fill="#fff" stroke="#8a8a8a"/><path d="M10.5 .5v3h3" fill="none" stroke="#8a8a8a"/><rect x="4" y="6" width="3" height="5" fill="#6aa8d8"/><rect x="7" y="5" width="3" height="6" fill="#e8a23a"/><path d="M5 9h6" stroke="#5aa05a" stroke-width="1.5"/></svg><div class="t">флоренс.jpg</div><svg class="ch" viewBox="0 0 10 7"><path d="M1 6 5 2 9 6" stroke="#5f6368" stroke-width="1.6" fill="none"/></svg></div>
<div class="dsep" style="left:230px"></div>
<div class="dsep" style="left:457px"></div>
<div class="dsep" style="left:684px"></div>
<div class="dsep" style="left:911px"></div>
<div class="dsep" style="left:1138px"></div>
<div class="dsep" style="left:1365px"></div>
<div class="a" style="left:1459px;top:7px;width:105px;height:32px;border:1px solid #dadce0;border-radius:4px"></div>
<div class="a" style="left:1474px;top:17px;font-size:12px;line-height:14px;color:#3c4043;white-space:nowrap">Показать все</div>
<svg class="a" style="left:1577px;top:18px" width="11" height="11" viewBox="0 0 11 11"><path d="M1 1 10 10M10 1 1 10" stroke="#5f6368" stroke-width="1.6"/></svg>
</div>

<!-- TASKBAR -->
<div id="taskbar" class="a">
<!-- start orb -->
<svg class="a" style="left:8px;top:1px" width="38" height="38" viewBox="0 0 38 38">
<defs><radialGradient id="orb" cx=".5" cy=".35" r=".6"><stop offset="0" stop-color="#5ab0e8"/><stop offset=".55" stop-color="#1b5e9a"/><stop offset="1" stop-color="#0c2f5a"/></radialGradient>
<radialGradient id="orbg" cx=".5" cy="1" r=".5"><stop offset="0" stop-color="#6fe8ff"/><stop offset="1" stop-color="#6fe8ff" stop-opacity="0"/></radialGradient></defs>
<circle cx="19" cy="19" r="18" fill="url(#orb)" stroke="#1a3350" stroke-width="1"/>
<ellipse cx="19" cy="32" rx="11" ry="6" fill="url(#orbg)"/>
<path d="M10 12 C13 10 16 10 18 12 L17 18 C15 16 12 16 9.5 18Z" fill="#f0562a"/>
<path d="M19.5 12.5 C22 14 25 14 28 12 L27 18 C24 20 21 20 18.8 18.5Z" fill="#7cba2a"/>
<path d="M9.3 19.5 C12 17.5 15 17.5 16.8 19.5 L16 25 C14 23 11 23 8.5 25Z" fill="#1f9ee8"/>
<path d="M18.6 20 C21 21.5 24 21.5 26.8 19.5 L26 25.5 C23 27.5 20 27.5 17.8 26Z" fill="#fcc21a"/>
<ellipse cx="19" cy="11" rx="12" ry="7" fill="#fff" opacity=".18"/>
</svg>
<!-- IE -->
<svg class="a" style="left:72px;top:2px" width="36" height="36" viewBox="0 0 36 36">
<defs><linearGradient id="ieg" x1="0" y1="0" x2="0" y2="1"><stop offset="0" stop-color="#6cd0fa"/><stop offset="1" stop-color="#1a8fd8"/></linearGradient></defs>
<path d="M9.5 19.5 H27.5 A9 9 0 1 0 25 26" stroke="url(#ieg)" stroke-width="5" fill="none"/>
<path d="M5 32 C2 28 8 17 16 11 C24 5 32 2 34 4.5 C35.5 6.5 33 11 29 15" stroke="#f2c21a" stroke-width="2.4" fill="none" stroke-linecap="round"/>
<path d="M5 32 C7 34.5 12 33 16 31" stroke="#f2c21a" stroke-width="2.4" fill="none" stroke-linecap="round"/>
</svg>
<!-- explorer button -->
<div class="tb" style="left:121px;width:60px;background:linear-gradient(#dfe8f2,#c1d2e5)"></div>
<svg class="a" style="left:134px;top:4px" width="34" height="32" viewBox="0 0 34 32">
<path d="M2 6h10l2 2h18v20H2z" fill="#e6c66a"/>
<path d="M3 10h28v18H3z" fill="#f7e3a0"/>
<rect x="5" y="3" width="5" height="5" fill="#fff"/><rect x="5" y="3" width="3" height="2" fill="#2faa2f"/>
<rect x="13" y="4" width="5" height="5" fill="#fff"/><rect x="13" y="4" width="3" height="2" fill="#d83030"/>
<rect x="20" y="6" width="6" height="4" fill="#fff"/><rect x="20" y="6" width="3" height="2" fill="#2f7ad8"/>
<path d="M7 20h20v10h-5v-5H12v5H7z" fill="#8fd0f0" stroke="#4aa0d0" stroke-width=".8"/>
</svg>
<!-- media player -->
<svg class="a" style="left:197px;top:8px" width="32" height="25" viewBox="0 0 32 25">
<rect x="6" y="1" width="22" height="22" fill="#c6dff2" stroke="#6aa0c8" stroke-width=".8"/>
<rect x="4" y="2" width="22" height="22" fill="#d8ecfa" stroke="#6aa0c8" stroke-width=".8"/>
<circle cx="13" cy="13" r="9.5" fill="#f07a12"/>
<circle cx="13" cy="13" r="7" fill="#fa9a2a"/>
<path d="M10 8.5 18 13 10 17.5z" fill="#fff"/>
</svg>
<!-- dropbox -->
<svg class="a" style="left:258px;top:5px" width="34" height="30" viewBox="0 0 34 30">
<path d="M9 1 1 6.5 9 12 17 6.5zM25 1l-8 5.5 8 5.5 8-5.5zM1 17.5 9 23l8-5.5L9 12zM33 17.5 25 23l-8-5.5 8-5.5zM9 25l8 5 8-5-8-5.5z" fill="#fff"/>
</svg>
<!-- amazon -->
<svg class="a" style="left:321px;top:3px" width="32" height="33" viewBox="0 0 32 33">
<rect width="32" height="33" rx="3" fill="#232f3e"/>
<text x="16" y="22" font-family="Liberation Sans" font-weight="700" font-size="22" fill="#fff" text-anchor="middle">a</text>
<path d="M6 24c6 3.5 14 3.5 19 0" stroke="#fff" stroke-width="2" fill="none"/><path d="M23 22.5l3 1-1.5 2.8" stroke="#fff" stroke-width="1.6" fill="none"/>
</svg>
<!-- chrome button -->
<div class="tb" style="left:370px;width:59px;background:linear-gradient(#e4ecf4,#c7d7e8)"></div>
<svg class="a" style="left:383px;top:5px" width="31" height="31" viewBox="0 0 32 32">
<circle cx="16" cy="16" r="15" fill="#db4437"/>
<path d="M16 16 3 8.5A15 15 0 0 0 9.5 29.5z" fill="#0f9d58"/>
<path d="M16 16 9.5 29.5A15 15 0 0 0 31 16h-2z" fill="#ffcd40"/>
<path d="M16 16 3 8.5A15 15 0 0 1 16 1L31 16z" fill="#db4437" opacity="0"/>
<path d="M16 16h15A15 15 0 0 1 9.5 29.5z" fill="#ffcd40"/>
<path d="M16 16 9.5 29.5A15 15 0 0 1 3 8.5z" fill="#0f9d58"/>
<circle cx="16" cy="16" r="7" fill="#fff"/>
<circle cx="16" cy="16" r="5.5" fill="#4285f4"/>
</svg>
<!-- openoffice button -->
<div class="tb" style="left:431px;width:55px;background:linear-gradient(#c8d8ea,#b4c8de)"></div>
<div class="a" style="left:487px;top:2px;width:3px;height:38px;border:1px solid rgba(40,60,90,.5);border-left:none;border-radius:0 2px 2px 0;background:#b8cadf"></div>
<svg class="a" style="left:442px;top:5px" width="31" height="31" viewBox="0 0 32 32">
<circle cx="16" cy="16" r="15" fill="#1a86d6"/>
<path d="M4 21c4-2 9-2.5 12-1 2-2 6-3 11-2-4 0-7 1.5-9 4-3-1.5-8-1.5-14-1z" fill="#fff"/>
<path d="M13 12c2-1 5-1 7 0 1-1 3-1.5 5-1-2 0-3.5.8-4.5 2-2-1-5-1.5-7.5-1z" fill="#fff"/>
</svg>
<!-- zoom button -->
<div class="tb" style="left:494px;width:54px;background:linear-gradient(#c8d8ea,#b4c8de)"></div>
<div class="a" style="left:548px;top:2px;width:4px;height:38px;border:1px solid rgba(40,60,90,.5);border-left:none;border-radius:0 2px 2px 0;background:#b8cadf"></div>
<svg class="a" style="left:505px;top:5px" width="31" height="31" viewBox="0 0 31 31">
<rect width="31" height="31" rx="9" fill="#4a8cf7"/>
<rect x="6" y="10" width="13" height="11" rx="2" fill="#fff"/>
<path d="M20 14 25 10.5v10L20 17z" fill="#fff"/>
</svg>
<!-- tray -->
<div class="a" style="left:1343px;top:10px;font-size:11px;line-height:12px;color:#eef2f8;white-space:nowrap">RU</div>
<svg class="a" style="left:1370px;top:5px" width="33" height="33" viewBox="0 0 33 33">
<defs><radialGradient id="help" cx=".5" cy=".6" r=".55"><stop offset="0" stop-color="#0a1a40"/><stop offset=".75" stop-color="#0f3070"/><stop offset="1" stop-color="#2f8ae0"/></radialGradient></defs>
<circle cx="16.5" cy="16.5" r="15.5" fill="url(#help)"/>
<text x="16.5" y="25" font-family="Liberation Sans" font-weight="700" font-size="24" fill="#fff" text-anchor="middle">?</text>
</svg>
<svg class="a" style="left:1416px;top:18px" width="11" height="7" viewBox="0 0 11 7"><path d="M1 6 5.5 1 10 6z" fill="#f2f4f8"/></svg>
<svg class="a" style="left:1437px;top:13px" width="16" height="17" viewBox="0 0 16 17"><rect x="1" y="3" width="8" height="12" fill="none" stroke="#fff" stroke-width="1.6"/><path d="M6 6h8v6H6z" fill="#fff"/><path d="M8 3v3M12 3v3M10 12v4" stroke="#fff" stroke-width="1.5"/><rect x="2" y="4" width="6" height="10" fill="none" stroke="#222" stroke-width=".6"/></svg>
<svg class="a" style="left:1461px;top:12px" width="17" height="18" viewBox="0 0 17 18"><path d="M2 1v16" stroke="#fff" stroke-width="1.6"/><path d="M3 2h6l2 2h5l-2 4 2 3H10L8 9H3z" fill="#fff"/><path d="M2 1v16" stroke="#333" stroke-width=".5"/></svg>
<svg class="a" style="left:1485px;top:12px" width="17" height="17" viewBox="0 0 17 17"><path d="M1 6h3l4-4v13l-4-4H1z" fill="#fff" stroke="#444" stroke-width=".5"/><path d="M10.5 5c1.3 1 1.3 6 0 7M13 3c2.3 2 2.3 9 0 11" stroke="#fff" stroke-width="1.3" fill="none"/></svg>
<div class="a" style="left:1533px;top:6px;font-size:11px;line-height:12px;color:#fff;white-space:nowrap">12:02</div>
<div class="a" style="left:1519px;top:22px;font-size:11px;line-height:12px;color:#fff;white-space:nowrap;letter-spacing:-0.1px">13.05.2020</div>
<div class="a" style="left:1585px;top:1px;width:14px;height:38px;border:1px solid #333d48;border-radius:2px;background:linear-gradient(90deg,#7d8ea3,#9aa9ba 50%,#6b7a8c)"></div>
</div>

</body></html>
